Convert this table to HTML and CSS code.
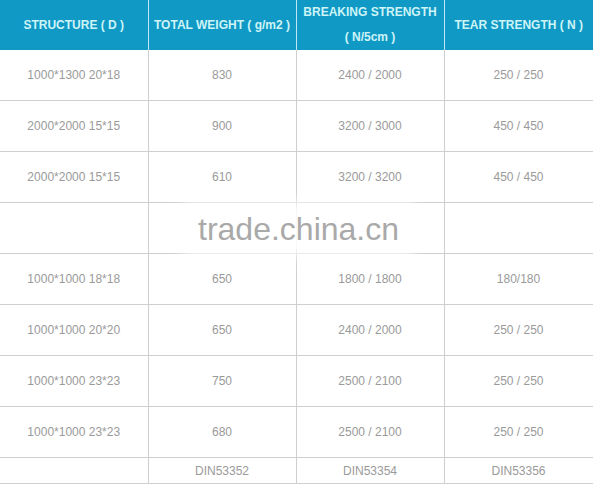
FILE: index.html
```html
<!DOCTYPE html>
<html>
<head>
<meta charset="utf-8">
<link rel="stylesheet" href="styles.css">
</head>
<body>
<div class="wrap">
<table class="spec">
  <colgroup>
    <col class="c1"><col class="c2"><col class="c3"><col class="c4">
  </colgroup>
  <thead>
    <tr>
      <th>STRUCTURE ( D )</th>
      <th>TOTAL WEIGHT ( g/m2 )</th>
      <th>BREAKING STRENGTH<br>( N/5cm )</th>
      <th>TEAR STRENGTH ( N )</th>
    </tr>
  </thead>
  <tbody>
    <tr><td>1000*1300 20*18</td><td>830</td><td>2400 / 2000</td><td>250 / 250</td></tr>
    <tr><td>2000*2000 15*15</td><td>900</td><td>3200 / 3000</td><td>450 / 450</td></tr>
    <tr><td>2000*2000 15*15</td><td>610</td><td>3200 / 3200</td><td>450 / 450</td></tr>
    <tr><td></td><td></td><td></td><td></td></tr>
    <tr><td>1000*1000 18*18</td><td>650</td><td>1800 / 1800</td><td>180/180</td></tr>
    <tr><td>1000*1000 20*20</td><td>650</td><td>2400 / 2000</td><td>250 / 250</td></tr>
    <tr><td>1000*1000 23*23</td><td>750</td><td>2500 / 2100</td><td>250 / 250</td></tr>
    <tr><td>1000*1000 23*23</td><td>680</td><td>2500 / 2100</td><td>250 / 250</td></tr>
    <tr class="std"><td></td><td>DIN53352</td><td>DIN53354</td><td>DIN53356</td></tr>
  </tbody>
</table>
<div class="watermark">trade.china.cn</div>
</div>
</body>
</html>
```
FILE: styles.css
```css
html, body {
  margin: 0;
  padding: 0;
  background: #fff;
}
.wrap {
  position: relative;
  width: 593px;
}
.spec {
  border-collapse: collapse;
  table-layout: fixed;
  width: 593px;
  font-family: "Liberation Sans", Arial, sans-serif;
  font-size: 12px;
}
.c1, .c2, .c3 { width: 148px; }
.c4 { width: 149px; }
.spec th {
  background: #1199c6;
  color: #cdf4f7;
  font-weight: bold;
  height: 50px;
  padding: 0;
  line-height: 25px;
  text-align: center;
  vertical-align: middle;
  border-left: 1px solid #bfe6f2;
}
.spec th:first-child {
  border-left: none;
}
.spec td {
  height: 50px;
  padding: 0;
  color: #9a9a9a;
  text-align: center;
  vertical-align: middle;
  border-left: 1px solid #cfcfcf;
  border-bottom: 1px solid #cfcfcf;
}
.spec td:first-child {
  border-left: none;
}
.spec td:last-child {
  border-right: 1px solid #e2e2e2;
}
.spec tr.std td {
  height: 25px;
}
.watermark {
  position: absolute;
  left: 190px;
  top: 210px;
  padding: 0 8px;
  font-family: "Liberation Sans", Arial, sans-serif;
  font-size: 32px;
  line-height: 38px;
  color: #a9a9a9;
  background: rgba(255,255,255,0.85);
  box-shadow: 0 0 12px 8px rgba(255,255,255,0.85);
}
```
